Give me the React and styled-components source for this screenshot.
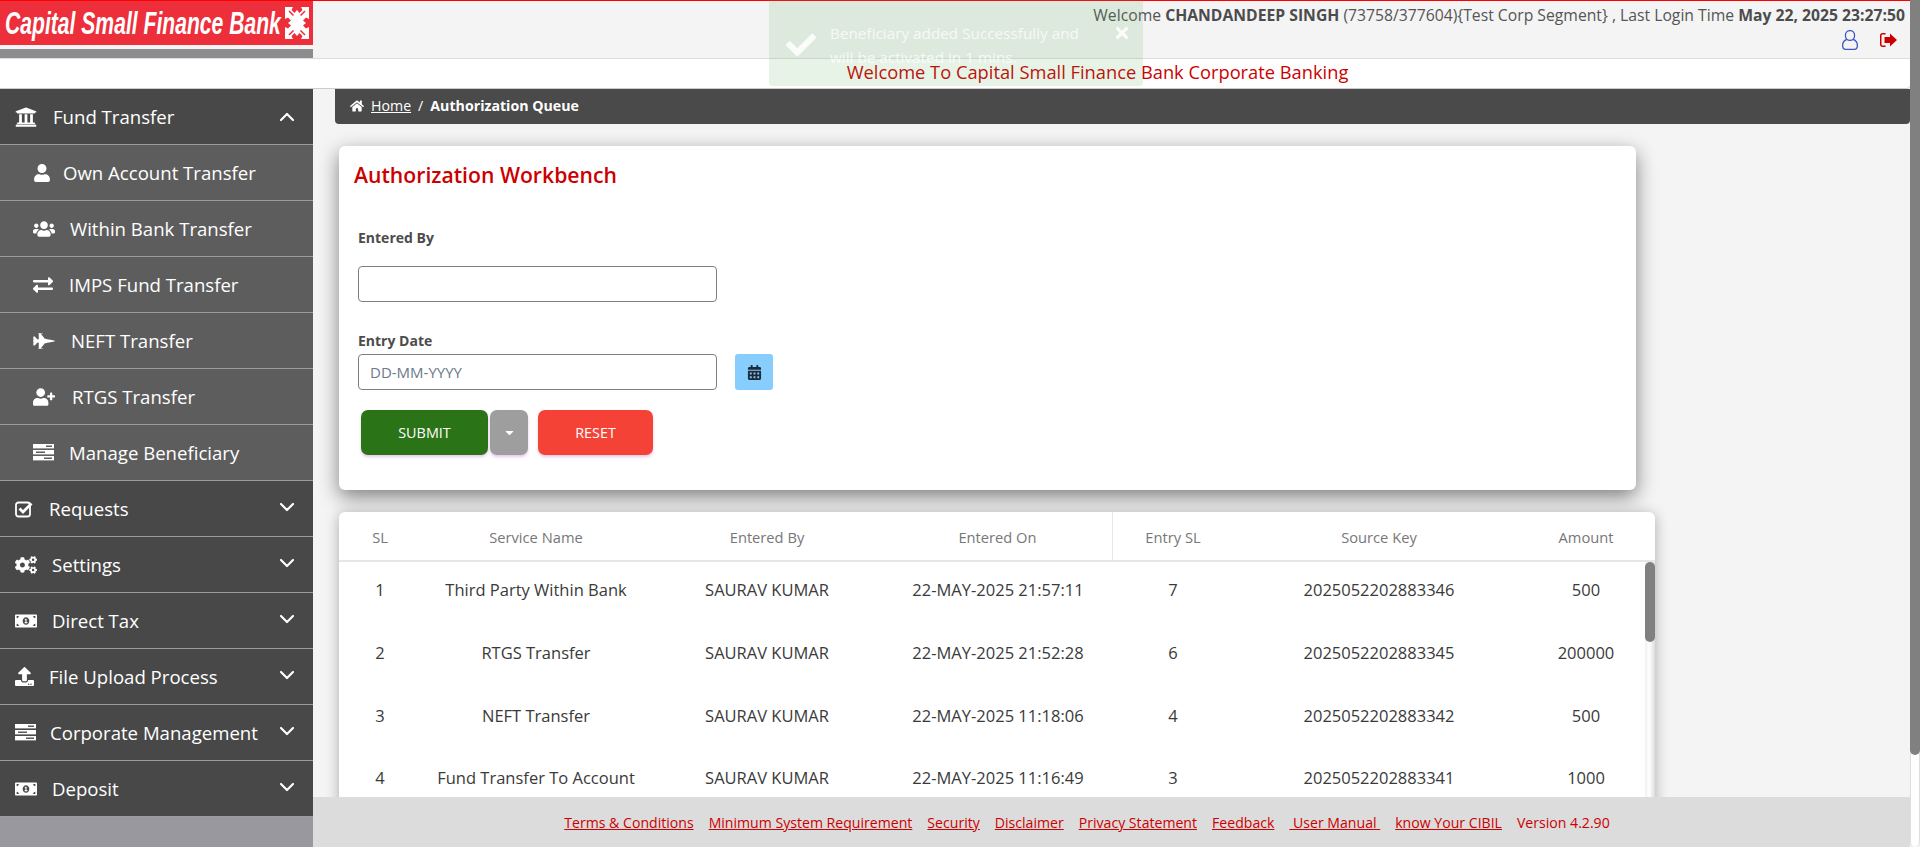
import React from 'react';
import styled, { createGlobalStyle } from 'styled-components';
import {
  FaUniversity, FaUser, FaUsers, FaExchangeAlt, FaFighterJet, FaUserPlus,
  FaCogs, FaMoneyBillAlt, FaUpload, FaHome, FaCalendarAlt, FaTimes,
  FaCheck, FaCaretDown,
} from 'react-icons/fa';
import { ChevronUp, ChevronDown } from 'lucide-react';

const Global = createGlobalStyle`
  html, body { margin: 0; padding: 0; height: 100%; overflow: hidden; }
  body { font-family: "Open Sans", "Noto Sans", sans-serif; background: #f4f4f4; }
  * { box-sizing: border-box; }
`;

const Page = styled.div`
  position: relative;
  display: flex;
  width: 1920px;
  height: 847px;
  overflow: hidden;
`;
const Shell = styled.div`
  flex: 1;
  min-width: 0;
  display: flex;
  flex-direction: column;
`;
const PageScroll = styled.div`
  width: 10px;
  background: #fff;
  border-left: 1px solid #ddd;
  border-right: 1px solid #ddd;
  border-radius: 0 0 5px 5px;
`;
const PageThumb = styled.div`
  height: 755px;
  margin: 0 -1px;
  background: #808080;
  border-radius: 0 0 5px 5px;
`;

const Header = styled.header`
  height: 59px;
  flex: none;
  display: flex;
  justify-content: space-between;
  background: #f4f4f4;
  border-top: 1px solid #f00;
  border-bottom: 1px solid #ddd;
`;
const Logo = styled.div`
  width: 313px;
  display: flex;
  flex-direction: column;
`;
const LogoRed = styled.div`
  height: 44px;
  background: #ec2f3a;
  display: flex;
  align-items: center;
  justify-content: space-between;
  padding: 0 4px 0 5px;
`;
const LogoText = styled.span`
  font: italic bold 32px "Liberation Sans", sans-serif;
  color: #fff;
  white-space: nowrap;
  display: inline-block;
  transform: scaleX(0.66);
  transform-origin: left center;
  width: 272px;
  letter-spacing: 0;
`;
const LogoBand = styled.div`
  height: 9px;
  margin-top: 4px;
  background: #8c8c8e;
`;
const UserArea = styled.div`
  display: flex;
  flex-direction: column;
  align-items: flex-end;
  padding: 4px 5px 0 0;
`;
const UserLine = styled.div`
  font-size: 15.72px;
  line-height: 20px;
  color: #555;
  white-space: nowrap;
  b { font-weight: 700; color: #4c4c4c; }
`;
const UserIcons = styled.div`
  display: flex;
  align-items: center;
  gap: 22px;
  margin-top: 5px;
  padding-right: 8px;
`;

const Banner = styled.div`
  height: 30px;
  flex: none;
  background: #fff;
  border-bottom: 1px solid #ccc;
  border-radius: 0 0 4px 0;
  text-align: center;
  padding-left: 285px;
  font-size: 18.3px;
  font-weight: 500;
  line-height: 26px;
  color: #c00;
  position: relative;
`;

const Toast = styled.div`
  position: absolute;
  left: 769px;
  top: 0;
  width: 374px;
  height: 86px;
  background: rgba(76, 160, 76, 0.13);
  border-radius: 0 0 4px 4px;
  color: rgba(255, 255, 255, 0.75);
  font-size: 15.3px;
  line-height: 24px;
  padding: 21px 0 0 61px;
  z-index: 5;
`;
const ToastCheck = styled(FaCheck)`
  position: absolute;
  left: 17px;
  top: 30px;
  width: 30px;
  height: 30px;
  color: rgba(255, 255, 255, 0.85);
`;
const ToastClose = styled(FaTimes)`
  position: absolute;
  left: 345px;
  top: 24px;
  width: 16px;
  height: 18px;
  color: rgba(255, 255, 255, 0.85);
`;

const Body = styled.div`
  flex: 1;
  min-height: 0;
  display: flex;
`;
const Sidebar = styled.nav`
  width: 313px;
  flex: none;
  background: #98989e;
`;
const NavRow = styled.div`
  height: 56px;
  display: flex;
  align-items: center;
  padding-left: ${p => (p.$sub ? '33px' : '15px')};
  padding-right: 14px;
  background: ${p => (p.$sub ? '#5d5d5d' : '#484848')};
  border-bottom: 1px solid #9c9c9c;
  color: #fff;
  font-size: 18.6px;
  white-space: nowrap;
`;
const NavIcon = styled.span`
  width: ${p => p.$w}px;
  flex: none;
  display: flex;
  align-items: center;
  svg { display: block; }
`;
const NavLabel = styled.span`
  flex: 1;
`;
const DownChevron = styled(ChevronDown)`
  margin-bottom: 3px;
  margin-left: -10px;
`;
const UpChevron = styled(ChevronUp)`
  margin-left: -10px;
`;

const Content = styled.div`
  flex: 1;
  min-width: 0;
  display: flex;
  flex-direction: column;
`;
const Main = styled.main`
  flex: 1;
  min-height: 0;
  overflow: hidden;
  background: #f4f4f4;
  padding-left: 22px;
`;
const Breadcrumb = styled.div`
  height: 35px;
  background: #4a4a4a;
  border-radius: 0 0 4px 4px;
  color: #fff;
  display: flex;
  align-items: center;
  padding: 0 0 2px 15px;
  font-size: 14.2px;
  gap: 7px;
  a { color: #fff; text-decoration: underline; }
  b { font-weight: 700; }
`;
const FormCard = styled.section`
  margin: 22px 0 0 4px;
  width: 1297px;
  height: 344px;
  background: #fff;
  border-radius: 6px;
  box-shadow: 0 7px 20px rgba(0, 0, 0, 0.48);
  padding: 14px 15px 0 15px;
`;
const Title = styled.h2`
  margin: 0;
  font-size: 21.2px;
  font-weight: 600;
  line-height: 30px;
  color: #c00;
`;
const Label = styled.label`
  display: block;
  font-size: 14px;
  font-weight: 700;
  line-height: 20px;
  color: #4c4c4c;
  margin-left: 4px;
  margin-top: ${p => p.$top}px;
`;
const Field = styled.div`
  display: flex;
  align-items: center;
  gap: 18px;
  margin: ${p => p.$top}px 0 0 4px;
`;
const Input = styled.input`
  width: 359px;
  height: 36px;
  border: 1px solid #808080;
  border-radius: 4px;
  padding: 0 11px;
  font: 15px "Open Sans", sans-serif;
  color: #333;
  background: #fff;
  outline: none;
  &::placeholder { color: #6c7a89; opacity: 1; }
`;
const CalButton = styled.div`
  width: 38px;
  height: 36px;
  border-radius: 3px;
  background: #87ceff;
  color: #1c2a3a;
  display: flex;
  align-items: center;
  justify-content: center;
`;
const Buttons = styled.div`
  display: flex;
  margin: 20px 0 0 7px;
`;
const Btn = styled.div`
  width: ${p => p.$w}px;
  height: 45px;
  margin-left: ${p => p.$ml || 0}px;
  background: ${p => p.$bg};
  border-radius: 7px;
  color: #fff;
  font-size: 14.4px;
  display: flex;
  align-items: center;
  justify-content: center;
  box-shadow: 0 2px 3px rgba(156, 39, 176, 0.25);
`;

const TableCard = styled.section`
  position: relative;
  margin: 22px 0 0 4px;
  width: 1316px;
  height: 400px;
  background: #fff;
  border-radius: 6px 6px 0 0;
  box-shadow: 0 2px 14px rgba(0, 0, 0, 0.3);
  overflow: hidden;
`;
const gridCols = '82px 230px 232px 230px 120px 292px 122px 1fr';
const HeadRow = styled.div`
  display: grid;
  grid-template-columns: ${gridCols};
  height: 50px;
  align-items: stretch;
  border-bottom: 2px solid #e6e6e6;
  font-size: 14.7px;
  font-weight: 500;
  color: #777;
`;
const HeadCell = styled.div`
  display: flex;
  align-items: center;
  justify-content: center;
  white-space: nowrap;
  padding-top: 2px;
  border-right: ${p => (p.$divided ? '1px solid #e6e6e6' : '0')};
`;
const Row = styled.div`
  display: grid;
  grid-template-columns: ${gridCols};
  height: 62.7px;
  padding-bottom: 7px;
  align-items: center;
  font-size: 16.5px;
  font-weight: 400;
  color: #3a3a3a;
`;
const Cell = styled.div`
  text-align: center;
  white-space: nowrap;
`;
const TableScroll = styled.div`
  position: absolute;
  right: 0;
  top: 50px;
  bottom: 0;
  width: 10px;
  background: linear-gradient(90deg, #f0f0f0, #fff 40%, #ddd);
`;
const TableThumb = styled.div`
  height: 80px;
  background: #808080;
  border-radius: 5px;
`;

const Footer = styled.footer`
  height: 50px;
  flex: none;
  background: #dcdcdc;
  display: flex;
  justify-content: center;
  align-items: center;
  gap: 15px;
  font-size: 14.1px;
  color: #c00;
  padding-right: 49px;
  white-space: nowrap;
  a { color: #c00; text-decoration: underline; }
`;

const UserOutline = () => (
  <svg width="16" height="20" viewBox="0 0 16 20" fill="none" stroke="#3f55c0" strokeWidth="1.3">
    <ellipse cx="8" cy="5.500" rx="4.600" ry="4.900" />
    <path d="M4.800 9.300C2.500 10.300.7 12 .7 14.500v1.500c0 2 1.300 3.300 3 3.300h8.600c1.700 0 3-1.300 3-3.300v-1.500c0-2.500-1.800-4.200-4.100-5.200" />
  </svg>
);
const SignOut = () => (
  <svg width="17" height="14" viewBox="0 0 17 14" fill="#c00">
    <path d="M5.500 0H2.500C1 0 0 1 0 2.500v9C0 13 1 14 2.500 14h3v-1.500h-3c-.6 0-1-.4-1-1v-9c0-.6.4-1 1-1h3z" />
    <path d="M10 .5 L17 7 L10 13.500 V10 H4.500 V4 H10z" />
  </svg>
);

const LogoMark = () => (
  <svg width="24" height="32" viewBox="0 0 24 32" fill="#fff">
    <path d="M0 0h8l-1.500 3 3 3 2.500-3 2.500 3 3-3L16 0h8v12l-3-1.500-3 3 3 2.500-3 2.500 3 3 3-1.500v12h-8l1.500-3-3-3-2.500 3-2.500-3-3 3L8 32H0V20l3 1.500 3-3L3 16l3-2.500-3-3L0 12z" />
    <path d="M4 4l4.500 4.500M20 4l-4.500 4.500M4 28l4.500-4.500M20 28l-4.500-4.500" stroke="#ec2f3a" strokeWidth="1.500" />
  </svg>
);

const TasksIcon = ({ size }) => (
  <svg width={size} height={size * 0.78} viewBox="0 0 21 16.400">
    <rect y="0" width="21" height="4.400" fill="#fff" />
    <rect y="6" width="21" height="4.400" fill="#fff" />
    <rect y="12" width="21" height="4.400" fill="#fff" />
    <rect x="13" y="1.500" width="6" height="1.500" fill="#5d5d5d" />
    <rect x="3" y="7.500" width="9" height="1.500" fill="#5d5d5d" />
    <rect x="11" y="13.500" width="8" height="1.500" fill="#5d5d5d" />
  </svg>
);
const CheckSquare = ({ size }) => (
  <svg width={size} height={size} viewBox="0 0 18 18">
    <rect x="1" y="2.500" width="14" height="14" rx="2.500" fill="none" stroke="#fff" strokeWidth="1.800" />
    <path d="M4.500 8.500 L8 12 L16.500 3.500" fill="none" stroke="#fff" strokeWidth="2.800" />
  </svg>
);

const menu = [
  { label: 'Fund Transfer', Icon: FaUniversity, size: 22, w: 38, open: true },
  { label: 'Own Account Transfer', Icon: FaUser, size: 18, w: 30, sub: true },
  { label: 'Within Bank Transfer', Icon: FaUsers, size: 22, w: 37, sub: true },
  { label: 'IMPS Fund Transfer', Icon: FaExchangeAlt, size: 20, w: 36, sub: true },
  { label: 'NEFT Transfer', Icon: FaFighterJet, size: 22, w: 38, sub: true },
  { label: 'RTGS Transfer', Icon: FaUserPlus, size: 22, w: 39, sub: true },
  { label: 'Manage Beneficiary', Icon: TasksIcon, size: 21, w: 36, sub: true },
  { label: 'Requests', Icon: CheckSquare, size: 18, w: 34 },
  { label: 'Settings', Icon: FaCogs, size: 22, w: 37 },
  { label: 'Direct Tax', Icon: FaMoneyBillAlt, size: 22, w: 37 },
  { label: 'File Upload Process', Icon: FaUpload, size: 19, w: 34 },
  { label: 'Corporate Management', Icon: TasksIcon, size: 21, w: 35 },
  { label: 'Deposit', Icon: FaMoneyBillAlt, size: 22, w: 37 },
];

const heads = ['SL', 'Service Name', 'Entered By', 'Entered On', 'Entry SL', 'Source Key', 'Amount'];
const rows = [
  ['1', 'Third Party Within Bank', 'SAURAV KUMAR', '22-MAY-2025 21:57:11', '7', '2025052202883346', '500'],
  ['2', 'RTGS Transfer', 'SAURAV KUMAR', '22-MAY-2025 21:52:28', '6', '2025052202883345', '200000'],
  ['3', 'NEFT Transfer', 'SAURAV KUMAR', '22-MAY-2025 11:18:06', '4', '2025052202883342', '500'],
  ['4', 'Fund Transfer To Account', 'SAURAV KUMAR', '22-MAY-2025 11:16:49', '3', '2025052202883341', '1000'],
];
const links = ['Terms & Conditions', 'Minimum System Requirement', 'Security', 'Disclaimer', 'Privacy Statement', 'Feedback', '\u00a0User Manual\u00a0', 'know Your CIBIL'];

export default function App() {
  return (
    <Page>
      <Global />
      <Shell>
        <Header>
          <Logo>
            <LogoRed>
              <LogoText>Capital Small Finance Bank</LogoText>
              <LogoMark />
            </LogoRed>
            <LogoBand />
          </Logo>
          <UserArea>
            <UserLine>
              Welcome <b>CHANDANDEEP SINGH</b> (73758/377604){'{'}Test Corp Segment{'}'} , Last Login Time <b>May 22, 2025 23:27:50</b>
            </UserLine>
            <UserIcons>
              <UserOutline />
              <SignOut />
            </UserIcons>
          </UserArea>
        </Header>
        <Banner>Welcome To Capital Small Finance Bank Corporate Banking</Banner>
        <Body>
          <Sidebar>
            {menu.map(({ label, Icon, size, w, sub, open }) => (
              <NavRow key={label} $sub={sub}>
                <NavIcon $w={w}><Icon size={size} /></NavIcon>
                <NavLabel>{label}</NavLabel>
                {!sub && (open ? <UpChevron size={24} strokeWidth={2.2} /> : <DownChevron size={24} strokeWidth={2.2} />)}
              </NavRow>
            ))}
          </Sidebar>
          <Content>
            <Main>
              <Breadcrumb>
                <FaHome size={14} />
                <a>Home</a>
                <span>/</span>
                <b>Authorization Queue</b>
              </Breadcrumb>
              <FormCard>
                <Title>Authorization Workbench</Title>
                <Label $top={38}>Entered By</Label>
                <Field $top={18}><Input /></Field>
                <Label $top={29}>Entry Date</Label>
                <Field $top={3}>
                  <Input placeholder="DD-MM-YYYY" />
                  <CalButton><FaCalendarAlt size={15} /></CalButton>
                </Field>
                <Buttons>
                  <Btn $w={127} $bg="#2a7316">SUBMIT</Btn>
                  <Btn $w={38} $ml={2} $bg="#9e9e9e"><FaCaretDown size={13} /></Btn>
                  <Btn $w={115} $ml={10} $bg="#f44336">RESET</Btn>
                </Buttons>
              </FormCard>
              <TableCard>
                <HeadRow>
                  {heads.map((h, i) => (
                    <HeadCell key={h} $divided={i === 3}>{h}</HeadCell>
                  ))}
                </HeadRow>
                {rows.map(r => (
                  <Row key={r[0]}>
                    {r.map((c, i) => <Cell key={i}>{c}</Cell>)}
                  </Row>
                ))}
                <TableScroll><TableThumb /></TableScroll>
              </TableCard>
            </Main>
            <Footer>
              {links.map(l => <a key={l}>{l}</a>)}
              <span>Version 4.2.90</span>
            </Footer>
          </Content>
        </Body>
      </Shell>
      <PageScroll><PageThumb /></PageScroll>
      <Toast>
        <ToastCheck />
        <ToastClose />
        Beneficiary added Successfully and<br />will be activated in 1 mins.
      </Toast>
    </Page>
  );
}
